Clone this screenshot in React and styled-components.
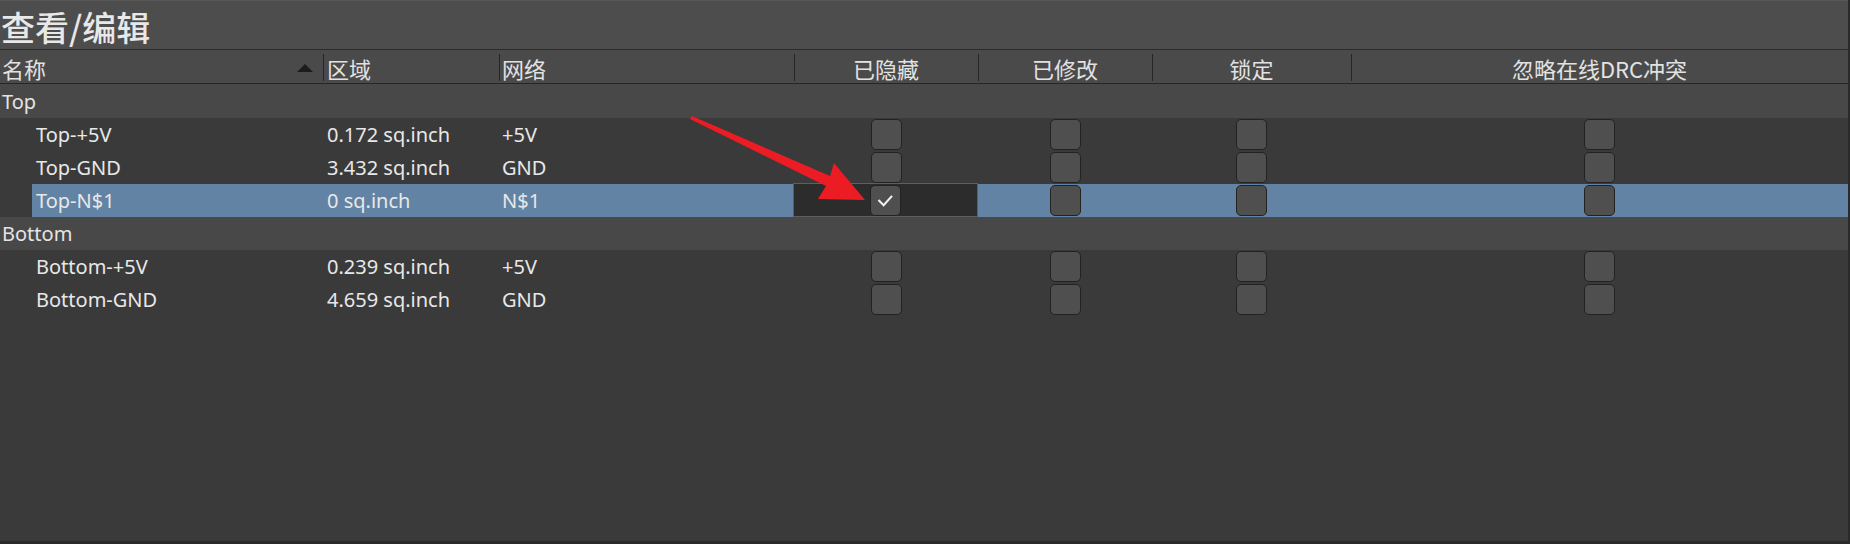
import React from 'react';
import styled, { createGlobalStyle } from 'styled-components';

const GlobalStyle = createGlobalStyle`
  html, body {
    margin: 0;
    padding: 0;
    background: #3a3a3a;
  }
  * {
    box-sizing: border-box;
  }
`;

const FONT = '"Noto Sans", "Noto Sans CJK SC", sans-serif';
const COLUMNS = '323px 176px 295px 184px 174px 199px 1fr';
const INNER_COLUMNS = '291px 176px 295px 184px 174px 199px 1fr';

const Panel = styled.div`
  position: relative;
  width: 1850px;
  height: 544px;
  display: flex;
  flex-direction: column;
  background: #3a3a3a;
  border-right: 2px solid #2a2a2a;
  border-bottom: 3px solid #2a2a2a;
  font-family: ${FONT};
  color: #e6e6e6;
  overflow: hidden;
`;

const TitleBar = styled.div`
  height: 50px;
  flex: none;
  display: flex;
  align-items: center;
  padding: 3px 0 0 1px;
  background: #4d4d4d;
  border-top: 1px solid #585858;
  border-bottom: 1px solid #2b2b2b;
  font-family: "Noto Sans CJK SC", sans-serif;
  font-size: 34px;
  font-weight: 500;
  color: #e8e8e8;
`;

const HeaderRow = styled.div`
  height: 34px;
  flex: none;
  display: grid;
  grid-template-columns: ${COLUMNS};
  background: #4a4a4a;
  border-bottom: 1px solid #262626;
`;

const HeaderCell = styled.div`
  position: relative;
  display: flex;
  align-items: center;
  justify-content: ${(p) => (p.$center ? 'center' : 'flex-start')};
  padding-left: ${(p) => (p.$center ? 0 : p.$pad || 4)}px;
  padding-top: 2px;
  font-family: "Noto Sans CJK SC", sans-serif;
  font-size: 22px;
  color: #e2e2e2;

  ${(p) =>
    p.$divider &&
    `
    &::before {
      content: '';
      position: absolute;
      left: 0;
      top: 4px;
      bottom: 3px;
      width: 1px;
      background: #262626;
    }
  `}
`;

const SortArrow = styled.span`
  position: absolute;
  right: 10px;
  top: 14px;
  width: 0;
  height: 0;
  border-left: 8px solid transparent;
  border-right: 8px solid transparent;
  border-bottom: 8px solid #1c1c1c;
`;

const GroupRow = styled.div`
  height: 33px;
  flex: none;
  display: flex;
  align-items: center;
  padding-left: 2px;
  background: #484848;
  font-size: 20px;
  color: #e4e4e4;

  &:first-child {
    height: 34px;
  }
`;

const Body = styled.div`
  display: flex;
  flex-direction: column;
`;

const DataRow = styled.div`
  height: 33px;
  flex: none;
  display: flex;
  padding-left: 32px;
  background: #3a3a3a;
`;

const RowGrid = styled.div`
  flex: 1;
  display: grid;
  grid-template-columns: ${INNER_COLUMNS};
  background: ${(p) => (p.$selected ? '#6283a3' : 'transparent')};
`;

const Cell = styled.div`
  display: flex;
  align-items: center;
  justify-content: ${(p) => (p.$center ? 'center' : 'flex-start')};
  padding-left: ${(p) => (p.$center ? 0 : p.$pad || 4)}px;
  font-size: 20px;
  color: #e8e8e8;
  white-space: nowrap;
`;

const EditorCell = styled(Cell)`
  background: #2c2c2c;
  border: 1px solid #5e5e5e;
  margin: -1px 0 0 -1px;
`;

const Box = styled.span`
  width: 31px;
  height: 31px;
  display: flex;
  align-items: center;
  justify-content: center;
  border-radius: 5px;
  background: #4f4f4f;
  border: 1px solid #222;
`;

const Arrow = styled.svg`
  position: absolute;
  left: 680px;
  top: 110px;
  pointer-events: none;
`;

const Checkbox = ({ checked }) => (
  <Box>
    {checked && (
      <svg width="31" height="31" viewBox="0 0 31 31">
        <polyline points="8,15 13.5,20.5 22.5,10.5" fill="none" stroke="#f2f2f2" strokeWidth="2.2" />
      </svg>
    )}
  </Box>
);

const groups = [
  {
    name: 'Top',
    items: [
      { name: 'Top-+5V', area: '0.172 sq.inch', net: '+5V' },
      { name: 'Top-GND', area: '3.432 sq.inch', net: 'GND' },
      { name: 'Top-N$1', area: '0 sq.inch', net: 'N$1', selected: true },
    ],
  },
  {
    name: 'Bottom',
    items: [
      { name: 'Bottom-+5V', area: '0.239 sq.inch', net: '+5V' },
      { name: 'Bottom-GND', area: '4.659 sq.inch', net: 'GND' },
    ],
  },
];

const App = () => {
  return (
    <Panel>
      <GlobalStyle />
      <TitleBar>查看/编辑</TitleBar>
      <HeaderRow>
        <HeaderCell $pad={2}>
          名称
          <SortArrow />
        </HeaderCell>
        <HeaderCell $divider>区域</HeaderCell>
        <HeaderCell $divider $pad={3}>网络</HeaderCell>
        <HeaderCell $divider $center>已隐藏</HeaderCell>
        <HeaderCell $divider $center>已修改</HeaderCell>
        <HeaderCell $divider $center>锁定</HeaderCell>
        <HeaderCell $divider $center>忽略在线DRC冲突</HeaderCell>
      </HeaderRow>
      <Body>
        {groups.map((g) => (
          <React.Fragment key={g.name}>
            <GroupRow>{g.name}</GroupRow>
            {g.items.map((it) => (
              <DataRow key={it.name}>
                <RowGrid $selected={it.selected}>
                  <Cell>{it.name}</Cell>
                  <Cell>{it.area}</Cell>
                  <Cell $pad={3}>{it.net}</Cell>
                  {it.selected ? (
                    <EditorCell $center>
                      <Checkbox checked />
                    </EditorCell>
                  ) : (
                    <Cell $center>
                      <Checkbox />
                    </Cell>
                  )}
                  <Cell $center>
                    <Checkbox />
                  </Cell>
                  <Cell $center>
                    <Checkbox />
                  </Cell>
                  <Cell $center>
                    <Checkbox />
                  </Cell>
                </RowGrid>
              </DataRow>
            ))}
          </React.Fragment>
        ))}
      </Body>
      <Arrow width="200" height="100" viewBox="0 0 200 100">
        <polygon
          points="12,6 150,66 154,53 185,90 138,89 146,76 10,9"
          fill="#ec1c24"
        />
      </Arrow>
    </Panel>
  );
};

export default App;
